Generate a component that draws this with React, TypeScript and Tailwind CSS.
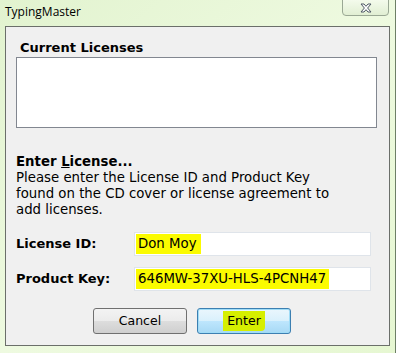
import React from "react";

export default function App() {
  const body = { fontFamily: '"DejaVu Sans", Verdana, sans-serif' };
  return (
    <div
      className="w-[396px] h-[353px] overflow-hidden flex flex-col bg-gradient-to-br from-[#e2f3cf] via-[#eefae0] to-[#e6f7d2] border-r border-[#6d7f66]"
      style={body}
    >
      {/* title bar */}
      <div className="h-[26px] flex items-start shrink-0">
        <div
          className="pl-[5px] pt-[5px] text-[12px] leading-[14px] text-black"
          style={{ fontFamily: '"Open Sans", "Noto Sans", sans-serif' }}
        >
          TypingMaster
        </div>
        <div className="ml-auto mr-[6px] -mt-[1px] w-[47px] h-[17px] rounded-b-[4px] border border-[#9aa894] bg-gradient-to-b from-[#f4fbec] to-[#e1efd3] flex items-center justify-center">
          <svg width="12" height="10" viewBox="0 0 12 10">
            <path
              d="M1 1 L4 1 L6 3.3 L8 1 L11 1 L7.6 5 L11 9 L8 9 L6 6.7 L4 9 L1 9 L4.4 5 Z"
              fill="#ffffff"
              stroke="#4e5964"
              strokeWidth="1"
              strokeLinejoin="round"
            />
          </svg>
        </div>
      </div>

      {/* client area */}
      <div className="ml-[5px] mr-[5px] h-[320px] border border-[#6b6f6a] bg-[#f0f0f0] flex flex-col px-[10px]">
        <div className="mt-[13px] ml-[4px] text-[13px] leading-[15px] font-bold text-black">
          Current Licenses
        </div>
        <div className="mt-[2px] w-[361px] h-[71px] border border-[#828790] bg-white" />

        <div className="mt-[26px] text-[13.3px] leading-[16px] text-black">
          <div className="font-bold">
            Enter <span className="underline">L</span>icense...
          </div>
          <div>Please enter the License ID and Product Key</div>
          <div>found on the CD cover or license agreement to</div>
          <div>add licenses.</div>
        </div>

        <div className="mt-[14px] flex items-center">
          <div className="w-[118px] text-[13px] font-bold text-black">License ID:</div>
          <div className="w-[237px] h-[24px] border border-[#dfe4ea] bg-white flex items-center pl-[1px]">
            <span className="bg-[#fbfb00] h-[20px] pl-[2px] leading-[20px] text-[13.3px] text-black pr-[4px]">
              Don Moy
            </span>
          </div>
        </div>
        <div className="mt-[11px] flex items-center">
          <div className="w-[118px] text-[13px] font-bold text-black">Product Key:</div>
          <div className="w-[237px] h-[24px] border border-[#dfe4ea] bg-white flex items-center pl-[1px]">
            <span className="bg-[#fbfb00] h-[20px] pl-[2px] leading-[20px] text-[13.3px] text-black pr-[3px]">
              646MW-37XU-HLS-4PCNH47
            </span>
          </div>
        </div>

        <div className="mt-[17px] flex justify-center gap-[10px] pr-[11px]">
          <button
            className="w-[94px] h-[26px] rounded-[3px] border border-[#707070] text-[12.5px] text-black"
            style={{
              background:
                "linear-gradient(#f3f3f3 0%, #ebebeb 50%, #dddddd 51%, #cfcfcf 100%)",
              ...body,
            }}
          >
            Cancel
          </button>
          <button
            className="w-[94px] h-[26px] rounded-[3px] border border-[#3c7fb1] text-[12.5px] text-black shadow-[inset_0_0_0_1px_#9fdcf7] flex items-center justify-center"
            style={{
              background:
                "linear-gradient(#eaf6fd 0%, #d9f0fc 50%, #bee6fd 51%, #a7d9f5 100%)",
              ...body,
            }}
          >
            <span className="bg-[#d6ef00] px-[4px] leading-[20px] rounded-br-[4px]">Enter</span>
          </button>
        </div>
      </div>
    </div>
  );
}
